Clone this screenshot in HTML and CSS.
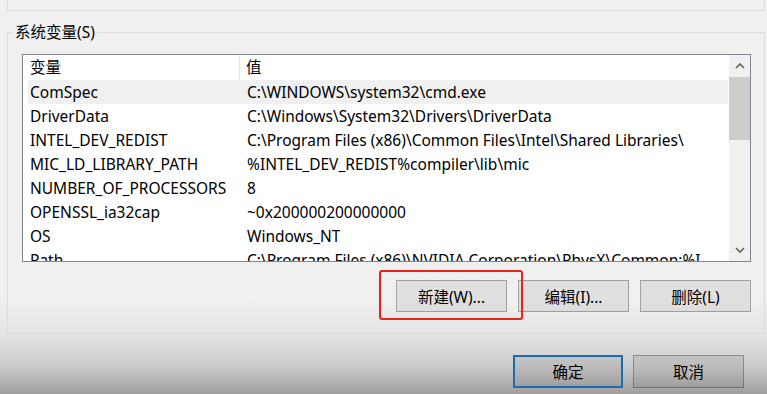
FILE: index.html
```html
<!DOCTYPE html>
<html lang="zh-CN">
<head>
<meta charset="UTF-8" />
<title>系统变量</title>
<link rel="stylesheet" href="styles.css">
</head>
<body>

<div class="prev-group"></div>

<fieldset class="group">
  <legend>系统变量(S)</legend>

  <div class="listbox">
    <div class="list">
      <div class="row head">
        <span class="name">变量</span>
        <span class="value">值</span>
      </div>
      <div class="row selected">
        <span class="name">ComSpec</span>
        <span class="value">C:\WINDOWS\system32\cmd.exe</span>
      </div>
      <div class="row">
        <span class="name">DriverData</span>
        <span class="value">C:\Windows\System32\Drivers\DriverData</span>
      </div>
      <div class="row">
        <span class="name">INTEL_DEV_REDIST</span>
        <span class="value">C:\Program Files (x86)\Common Files\Intel\Shared Libraries\</span>
      </div>
      <div class="row">
        <span class="name">MIC_LD_LIBRARY_PATH</span>
        <span class="value">%INTEL_DEV_REDIST%compiler\lib\mic</span>
      </div>
      <div class="row">
        <span class="name">NUMBER_OF_PROCESSORS</span>
        <span class="value">8</span>
      </div>
      <div class="row">
        <span class="name">OPENSSL_ia32cap</span>
        <span class="value">~0x200000200000000</span>
      </div>
      <div class="row">
        <span class="name">OS</span>
        <span class="value">Windows_NT</span>
      </div>
      <div class="row">
        <span class="name">Path</span>
        <span class="value">C:\Program Files (x86)\NVIDIA Corporation\PhysX\Common;%I</span>
      </div>
    </div>

    <!-- fake vertical scrollbar -->
    <div class="scrollbar">
      <div class="arrow">
        <svg width="10" height="6" viewBox="0 0 10 6"><path d="M1 5 L5 1 L9 5" fill="none" stroke="#606060" stroke-width="1.6"/></svg>
      </div>
      <div class="thumb"></div>
      <div class="track"></div>
      <div class="arrow">
        <svg width="10" height="6" viewBox="0 0 10 6"><path d="M1 1 L5 5 L9 1" fill="none" stroke="#606060" stroke-width="1.6"/></svg>
      </div>
    </div>
  </div>

  <div class="actions">
    <button class="btn marked">新建(W)...</button>
    <button class="btn">编辑(I)...</button>
    <button class="btn">删除(L)</button>
  </div>
</fieldset>

<div class="footer">
  <button class="btn primary">确定</button>
  <button class="btn">取消</button>
</div>

</body>
</html>
```

FILE: styles.css
```css
body {
  margin: 0;
  height: 394px;
  overflow: hidden;
  font-family: "Noto Sans", "Noto Sans CJK SC", sans-serif;
  font-size: 15.5px;
  color: #000;
  background: linear-gradient(to bottom, #f0f0f0 0, #f0f0f0 300px, #e4e4e4 335px, #c9c9c9 368px, #9e9e9e 394px);
}

.prev-group {
  height: 10px;
  margin: 0 2px 0 7px;
  border: 1px solid #dcdcdc;
  border-top: none;
}

.group {
  margin: 11px 2px 0 7px;
  padding: 12px 13px 21px 14px;
  border: 1px solid #dcdcdc;
  min-width: 0;
}
.group legend {
  margin-left: -9px;
  padding: 0 2px;
  line-height: 20px;
}

.listbox {
  display: flex;
  height: 206px;
  border: 1px solid #828790;
  background: #fff;
  overflow: hidden;
}
.list {
  flex: 1;
  min-width: 0;
  padding: 0 1px 0 5px;
}
.row {
  display: flex;
  height: 24px;
  line-height: 24px;
  white-space: nowrap;
}
.row .name {
  width: 212px;
  flex: none;
  padding-left: 2px;
  box-sizing: border-box;
}
.row .value {
  padding-left: 7px;
  overflow: hidden;
}
.row.head {
  height: 25px;
  line-height: 25px;
}
.row.head .name {
  border-right: 1px solid #e5e5e5;
}
.row.head .value {
  padding-left: 6px;
}
.row.selected {
  background: #f0f0f0;
}

.scrollbar {
  width: 21px;
  flex: none;
  display: flex;
  flex-direction: column;
  background: #f0f0f0;
}
.scrollbar .arrow {
  height: 22px;
  display: flex;
  align-items: center;
  justify-content: center;
}
.scrollbar .thumb {
  height: 63px;
  background: #cdcdcd;
}
.scrollbar .track {
  flex: 1;
}

.actions {
  display: flex;
  justify-content: flex-end;
  gap: 11px;
  margin-top: 18px;
}

.btn {
  font: inherit;
  color: #000;
  width: 111px;
  height: 32px;
  padding: 0;
  background: rgba(0, 0, 0, 0.065);
  border: 1px solid rgba(0, 0, 0, 0.28);
  border-radius: 0;
}
.btn.marked {
  position: relative;
}
.btn.marked::after {
  content: "";
  position: absolute;
  top: -11px;
  left: -18px;
  right: -17px;
  bottom: -9px;
  border: 2px solid #ec2117;
  border-radius: 3px;
}

.footer {
  display: flex;
  justify-content: flex-end;
  gap: 10px;
  margin: 21px 23px 0 0;
}
.footer .btn {
  height: 33px;
}
.btn.primary {
  width: 110px;
  border: 2px solid #1f6aad;
}
```
